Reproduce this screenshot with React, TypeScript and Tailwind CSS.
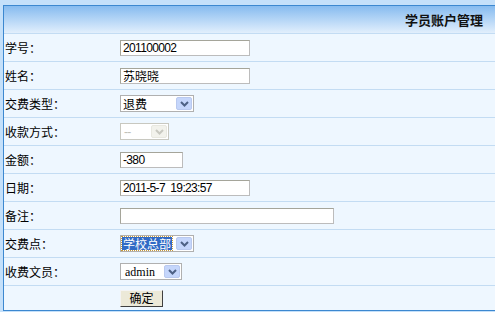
import React from "react";

const cjk = { fontFamily: '"Noto Sans CJK SC", "Liberation Sans", sans-serif' };
const latin = { fontFamily: '"Liberation Sans", "Noto Sans CJK SC", sans-serif', letterSpacing: "-0.65px", wordSpacing: "2.7px" };

function Arrow({ disabled }: { disabled?: boolean }) {
  return (
    <div
      className={
        "flex h-full w-[16px] items-center justify-center rounded-[2px] border " +
        (disabled ? "border-[#e8e8e0] bg-[#f2f2ec]" : "border-[#b9c9ef] bg-[#c5d6fb]")
      }
    >
      <svg width="9" height="6" viewBox="0 0 9 6">
        <path d="M1 1 L4.5 4.5 L8 1" fill="none" stroke={disabled ? "#c8c8c0" : "#4d6185"} strokeWidth="2" />
      </svg>
    </div>
  );
}

function Row({ label, children, last }: { label?: string; children?: React.ReactNode; last?: boolean }) {
  return (
    <div className={"flex items-center border-b " + (last ? "h-[25px] border-[#3c88d0]" : "h-[28px] border-[#c3dcf3]")}>
      <div className="w-[116px] pl-[1px] text-[12px] text-black" style={cjk}>
        {label}
      </div>
      {children}
    </div>
  );
}

function TextBox({ w, value, cn }: { w: number; value: string; cn?: boolean }) {
  return (
    <div
      className="flex h-[16px] items-center whitespace-pre border border-[#bcbcbc] border-t-[#a5a59a] border-l-[#a5a59a] bg-white pl-[2px] text-[12px] leading-none text-black"
      style={{ width: w, ...(cn ? cjk : latin) }}
    >
      {value}
    </div>
  );
}

export default function App() {
  return (
    <div className="h-[312px] w-[495px] overflow-hidden bg-[#c4e0fa] pl-[3px] pt-[5px]">
      <div className="border-l border-t border-[#3c88d0] bg-[#eef7ff]">
        <div className="flex h-[28px] items-center justify-end border-b border-[#c3dcf3] bg-gradient-to-b from-[#86bbef] to-[#e2effc] pr-[12px]">
          <span className="text-[13px] font-bold text-[#111]" style={cjk}>
            学员账户管理
          </span>
        </div>
        <Row label="学号：">
          <TextBox w={130} value="201100002" />
        </Row>
        <Row label="姓名：">
          <TextBox w={130} value="苏晓晓" cn />
        </Row>
        <Row label="交费类型：">
          <div className="flex h-[17px] w-[74px] items-center justify-between border border-[#b0b0b0] bg-white p-[1px] pl-[2px] text-[12px]" style={cjk}>
            <span className="leading-none">退费</span>
            <Arrow />
          </div>
        </Row>
        <Row label="收款方式：">
          <div className="flex h-[17px] w-[49px] items-center justify-between border border-[#c8c8c0] bg-white p-[1px] pl-[3px] text-[12px] text-[#c0c0b8]" style={latin}>
            <span className="leading-none">--</span>
            <Arrow disabled />
          </div>
        </Row>
        <Row label="金额：">
          <TextBox w={63} value="-380" />
        </Row>
        <Row label="日期：">
          <TextBox w={130} value="2011-5-7 19:23:57" />
        </Row>
        <Row label="备注：">
          <TextBox w={214} value="" />
        </Row>
        <Row label="交费点：">
          <div className="flex h-[17px] w-[74px] items-center justify-between border border-[#b0b0b0] bg-white p-[1px] text-[12px]" style={cjk}>
            <span className="flex h-full items-center bg-[#316ac5] px-[1px] leading-none text-white outline-1 outline-dotted outline-[#c89a3a]">学校总部</span>
            <Arrow />
          </div>
        </Row>
        <Row label="收费文员：">
          <div className="flex h-[17px] w-[62px] items-center justify-between border border-[#b0b0b0] bg-white p-[1px] pl-[4px] text-[12px]" style={{ fontFamily: '"Liberation Serif", serif' }}>
            <span className="leading-none">admin</span>
            <Arrow />
          </div>
        </Row>
        <Row last>
          <button
            className="flex h-[17px] w-[43px] items-center justify-center border border-[#f4f4f4] border-b-[#404040] border-r-[#404040] bg-[#ece9d8] text-[12px] leading-none text-black"
            style={cjk}
          >
            确定
          </button>
        </Row>
      </div>
    </div>
  );
}
